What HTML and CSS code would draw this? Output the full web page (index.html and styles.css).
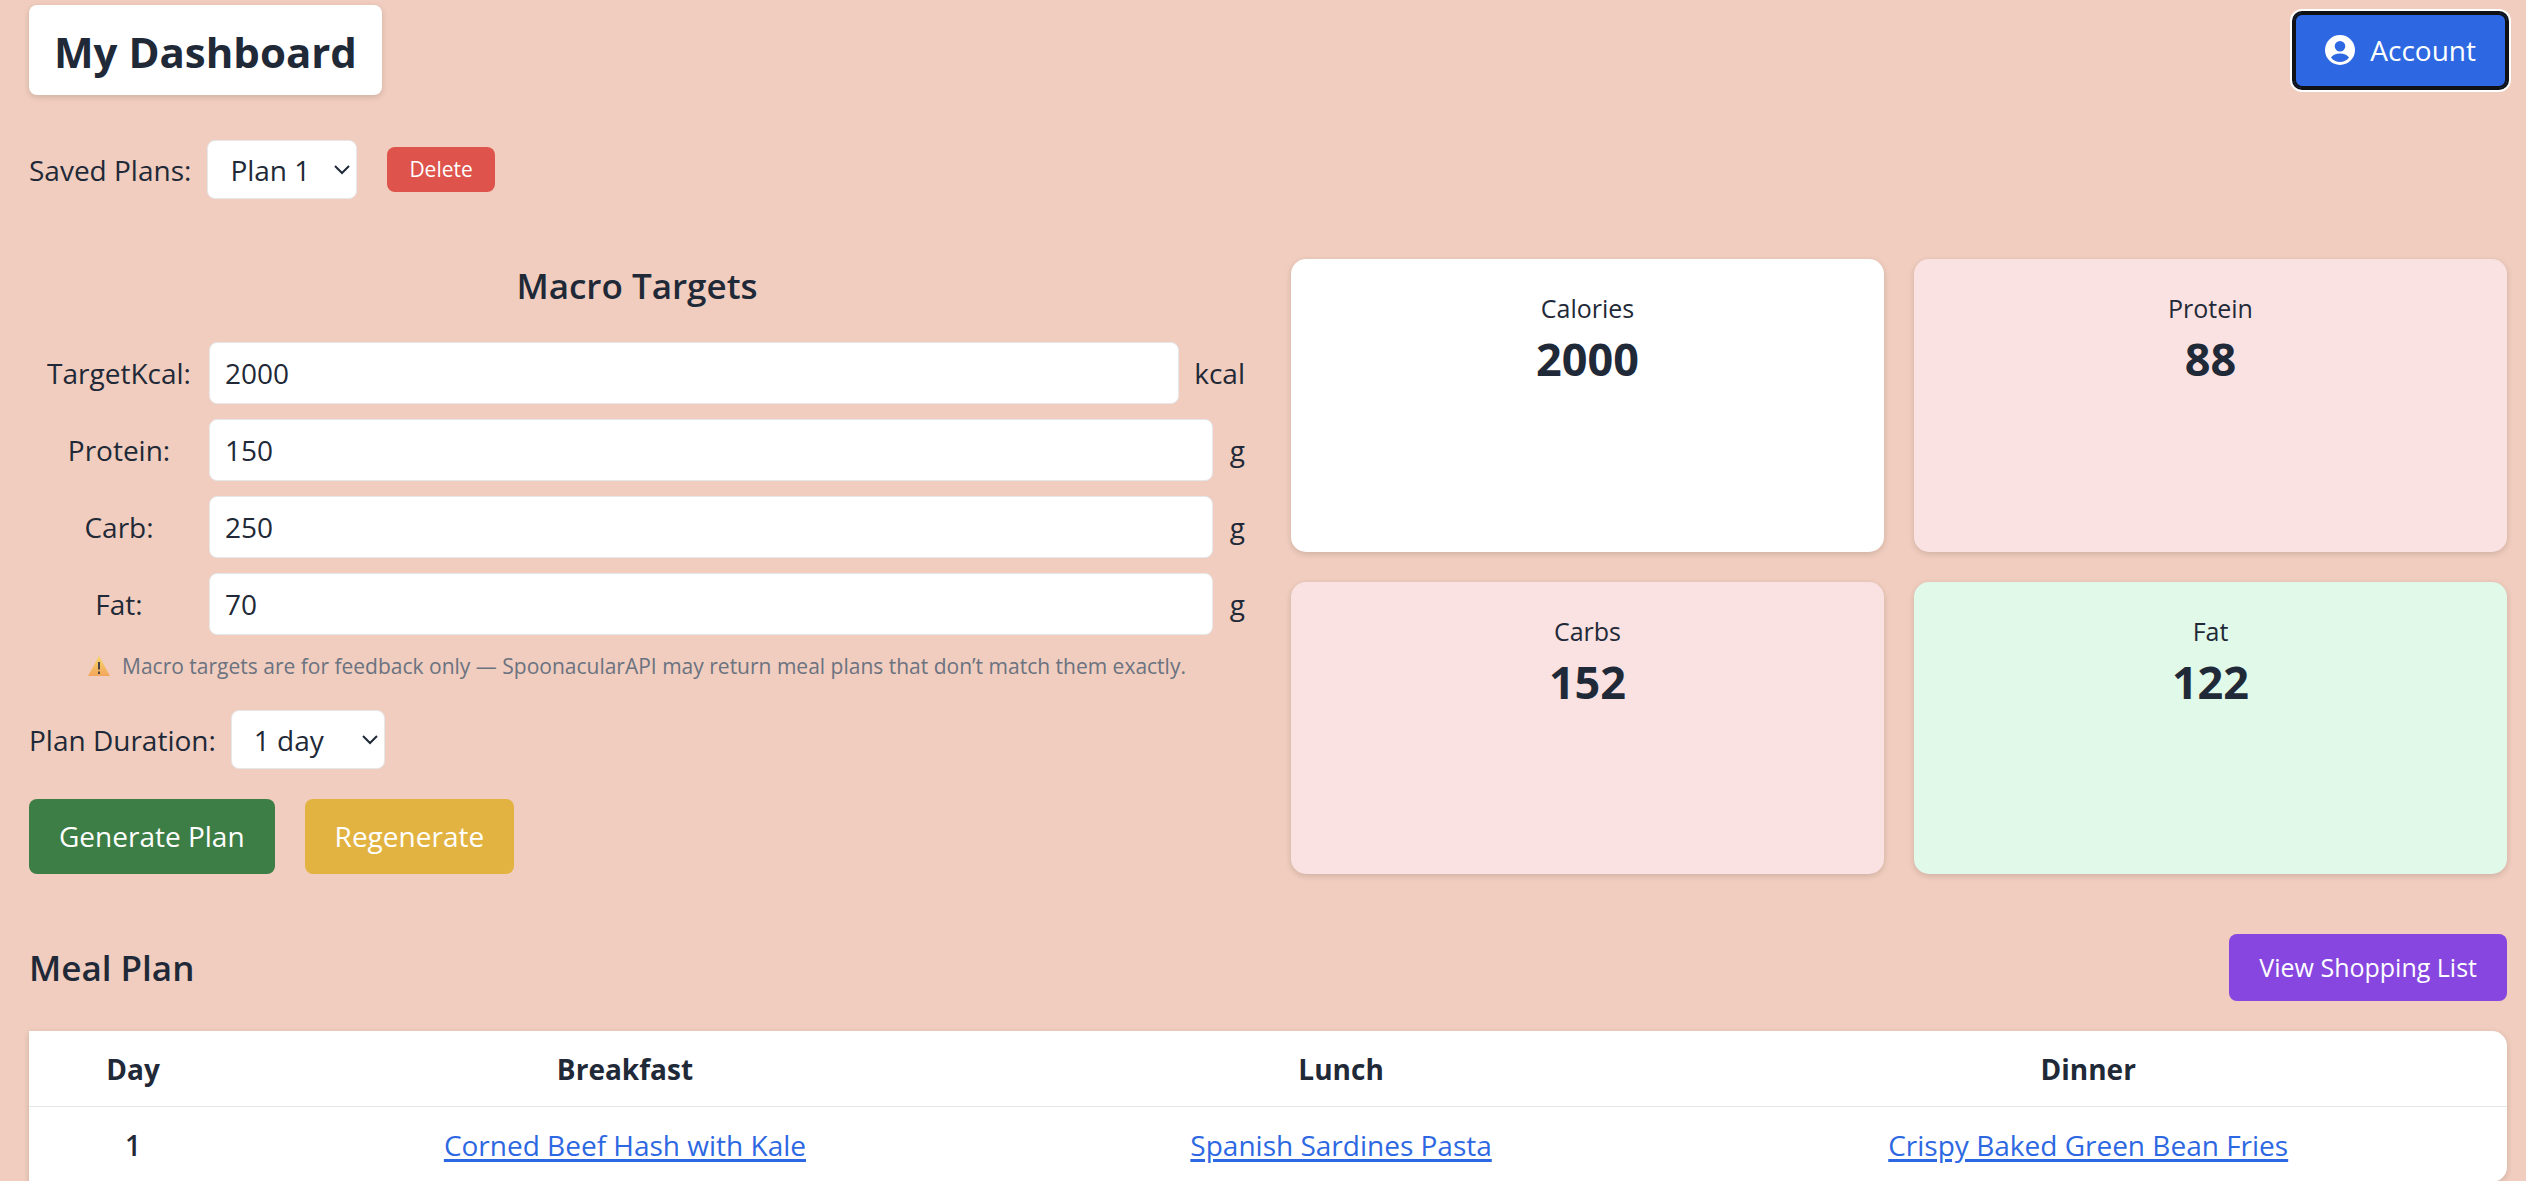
FILE: index.html
```html
<!DOCTYPE html>
<html lang="en">
<head>
<meta charset="utf-8">
<meta name="viewport" content="width=device-width, initial-scale=1">
<title>My Dashboard</title>
<link rel="stylesheet" href="styles.css">
</head>
<body>
<header class="topbar">
  <h1 class="title">My Dashboard</h1>
  <button class="btn btn-account" type="button">
    <svg class="account-icon" viewBox="0 0 30 30" aria-hidden="true">
      <path fill="currentColor" fill-rule="evenodd" d="M15 0a15 15 0 1 0 0 30a15 15 0 1 0 0-30zM15 6a5.3 5.3 0 1 1 0 10.600a5.300 5.300 0 1 1 0-10.600zM6 22.500c1.800-2.700 5-4 9-4s7.200 1.300 9 4c-2 2.800-5.300 4.500-9 4.500s-7-1.700-9-4.500z"/>
    </svg>
    Account
  </button>
</header>

<main>
  <div class="saved">
    <label for="saved-plan">Saved Plans:</label>
    <span class="picker picker-plan">
      <select id="saved-plan"><option>Plan 1</option></select>
      <svg class="chevron" viewBox="0 0 16 10" aria-hidden="true"><path d="M1 1l7 7 7-7" fill="none" stroke="currentColor" stroke-width="2"/></svg>
    </span>
    <button class="btn btn-delete" type="button">Delete</button>
  </div>

  <div class="overview">
    <form class="targets">
      <h2 class="heading centered">Macro Targets</h2>
      <div class="fields">
        <div class="field"><label for="kcal">TargetKcal:</label><input id="kcal" type="text" value="2000"><span class="unit">kcal</span></div>
        <div class="field"><label for="protein">Protein:</label><input id="protein" type="text" value="150"><span class="unit">g</span></div>
        <div class="field"><label for="carb">Carb:</label><input id="carb" type="text" value="250"><span class="unit">g</span></div>
        <div class="field"><label for="fat">Fat:</label><input id="fat" type="text" value="70"><span class="unit">g</span></div>
      </div>
      <p class="note">
        <svg class="warning" viewBox="0 0 22 20" aria-hidden="true">
          <defs><linearGradient id="amber" x1="0" y1="0" x2="0" y2="1"><stop offset="0" stop-color="#f8d568"/><stop offset="1" stop-color="#f3a65c"/></linearGradient></defs>
          <path d="M11 0l11 20H0z" fill="url(#amber)"/>
          <path d="M10 6h2v7.500h-2zM10 15.500h2V18h-2z" fill="#4a4448"/>
        </svg>
        Macro targets are for feedback only — SpoonacularAPI may return meal plans that don’t match them exactly.
      </p>
      <div class="duration">
        <label for="duration">Plan Duration:</label>
        <span class="picker picker-duration">
          <select id="duration"><option>1 day</option></select>
          <svg class="chevron" viewBox="0 0 16 10" aria-hidden="true"><path d="M1 1l7 7 7-7" fill="none" stroke="currentColor" stroke-width="2"/></svg>
        </span>
      </div>
      <div class="actions">
        <button class="btn btn-generate" type="button">Generate Plan</button>
        <button class="btn btn-regenerate" type="button">Regenerate</button>
      </div>
    </form>

    <section class="cards" aria-label="Totals">
      <div class="card"><p class="card-name">Calories</p><p class="card-value">2000</p></div>
      <div class="card over"><p class="card-name">Protein</p><p class="card-value">88</p></div>
      <div class="card over"><p class="card-name">Carbs</p><p class="card-value">152</p></div>
      <div class="card met"><p class="card-name">Fat</p><p class="card-value">122</p></div>
    </section>
  </div>

  <div class="plan-head">
    <h2 class="heading">Meal Plan</h2>
    <button class="btn btn-shopping" type="button">View Shopping List</button>
  </div>
  <table class="plan">
    <colgroup><col class="col-day"><col class="col-breakfast"><col class="col-lunch"><col></colgroup>
    <thead><tr><th scope="col">Day</th><th scope="col">Breakfast</th><th scope="col">Lunch</th><th scope="col">Dinner</th></tr></thead>
    <tbody><tr><th class="day" scope="row">1</th><td><a href="#">Corned Beef Hash with Kale</a></td><td><a href="#">Spanish Sardines Pasta</a></td><td><a href="#">Crispy Baked Green Bean Fries</a></td></tr></tbody>
  </table>
</main>
</body>
</html>
```
FILE: styles.css
```css
* { box-sizing: border-box; }

body {
  margin: 0;
  padding: 5px 19px 0 29px;
  background: #f0cdbe;
  color: #1f2937;
  font-family: "Open Sans", "Noto Sans", sans-serif;
  font-size: 28px;
  line-height: 42px;
}

h1, h2, p { margin: 0; }

button, input, select {
  font: inherit;
  color: inherit;
}

.topbar, .plan-head {
  display: flex;
  align-items: center;
  justify-content: space-between;
}

.title {
  padding: 17px 25px 13px;
  border-radius: 8px;
  background: #fff;
  box-shadow: 0 2px 6px rgba(0, 0, 0, 0.14);
  font-size: 42px;
  line-height: 60px;
}

.btn {
  border: 0;
  border-radius: 8px;
  padding: 0 30px;
  color: #fff;
  line-height: 75px;
  white-space: nowrap;
}

.btn-account {
  display: flex;
  align-items: center;
  gap: 15px;
  padding: 0 31px;
  background: #2d68e2;
  box-shadow: inset 0 0 0 2px #101114, 0 0 0 2px #101114, 0 0 0 4px #fff;
}

.account-icon { width: 30px; height: 30px; }

.saved {
  display: flex;
  align-items: center;
  margin-top: 45px;
}

.picker {
  position: relative;
  margin-left: 16px;
}

.picker select {
  display: block;
  width: 100%;
  height: 59px;
  padding: 0 22px;
  appearance: none;
  border: 1px solid #e5e7eb;
  border-radius: 8px;
  background: #fff;
}

.picker-plan { width: 150px; }
.picker-duration { width: 154px; }

.chevron {
  position: absolute;
  top: 25px;
  right: 7px;
  width: 16px;
  height: 10px;
  pointer-events: none;
}

.btn-delete {
  margin-left: 30px;
  padding: 0 22px;
  background: #de534b;
  font-size: 21px;
  line-height: 45px;
}

.overview {
  display: grid;
  grid-template-columns: 1fr 1fr;
  gap: 46px;
  margin-top: 60px;
}

.heading {
  font-size: 35px;
  font-weight: 600;
  line-height: 53px;
}

.centered { text-align: center; }

.fields {
  display: grid;
  gap: 15px;
  margin-top: 30px;
}

.field { display: flex; align-items: center; }

.field label { width: 180px; text-align: center; }

.field input {
  flex: 1;
  min-width: 0;
  height: 62px;
  padding: 0 15px;
  border: 1px solid #e5e7eb;
  border-radius: 8px;
  background: #fff;
}

.unit { min-width: 17px; margin-left: 15px; text-align: right; }

.note {
  display: flex;
  align-items: center;
  justify-content: center;
  gap: 12px;
  margin-top: 16px;
  color: #6b7280;
  font-size: 21px;
  line-height: 30px;
}

.warning { width: 22px; height: 20px; }

.duration {
  display: flex;
  align-items: center;
  margin-top: 29px;
}

.duration .picker { margin-left: 15px; }

.actions {
  display: flex;
  gap: 30px;
  margin-top: 30px;
}

.btn-generate { background: #3d7e46; }
.btn-regenerate { background: #e3b341; }

.cards {
  display: grid;
  grid-template-columns: 1fr 1fr;
  grid-auto-rows: 1fr;
  gap: 30px;
}

.card {
  padding: 30px;
  border-radius: 15px;
  background: #fff;
  box-shadow: 0 2px 6px rgba(0, 0, 0, 0.14);
  text-align: center;
}

.over { background: #fae2e2; }
.met { background: #e0f9e8; }

.card-name { font-size: 25px; line-height: 38px; }
.card-value { font-size: 45px; font-weight: 700; line-height: 64px; }

.plan-head { margin-top: 60px; }

.btn-shopping {
  background: #8646df;
  font-size: 25px;
  line-height: 67px;
}

.plan {
  width: 100%;
  margin-top: 30px;
  table-layout: fixed;
  border-spacing: 0;
  border-radius: 0 15px 15px 0;
  background: #fff;
  box-shadow: 0 2px 6px rgba(0, 0, 0, 0.14);
  text-align: center;
}

.plan th, .plan td { padding: 17px 15px 16px; }
.plan thead th { border-bottom: 1px solid #e5e7eb; }
.plan .day { font-weight: 600; }

.col-day { width: 8.4%; }
.col-breakfast { width: 31.3%; }
.col-lunch { width: 26.5%; }

.plan a { color: #2d68e2; text-underline-offset: 3px; text-decoration-thickness: 3px; }
```
